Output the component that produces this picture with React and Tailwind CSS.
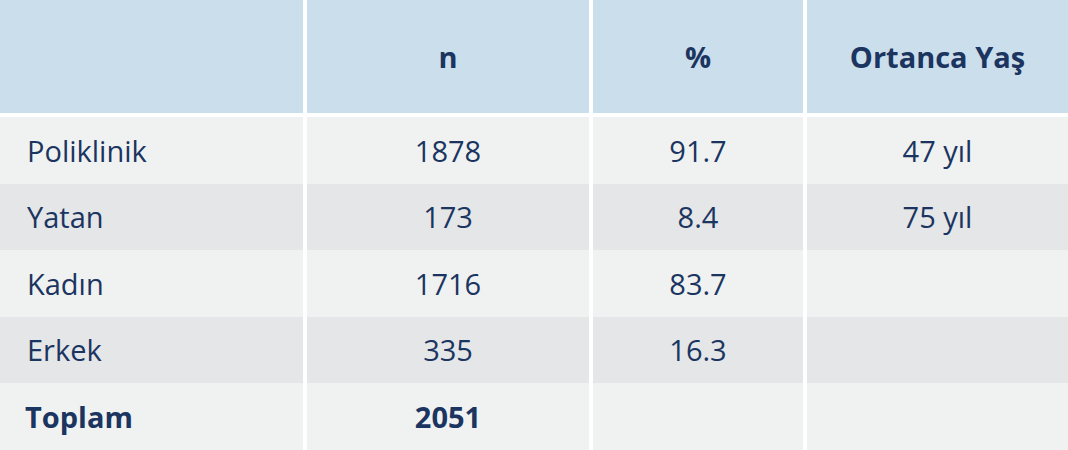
import React from 'react';

const rows = [
  { label: 'Poliklinik', n: '1878', pct: '91.7', age: '47 yıl' },
  { label: 'Yatan', n: '173', pct: '8.4', age: '75 yıl' },
  { label: 'Kadın', n: '1716', pct: '83.7', age: '' },
  { label: 'Erkek', n: '335', pct: '16.3', age: '' },
];

const cols = 'grid grid-cols-[303px_282px_210px_261px] gap-x-[4px]';

export default function App() {
  return (
    <div className="w-[1068px] h-[450px] bg-white overflow-hidden text-[#1b3560] font-['Open_Sans',sans-serif]">
      {/* Header */}
      <div className={`${cols} h-[113px] mb-[4px]`}>
        <div className="bg-[#cbdeeb]" />
        <div className="bg-[#cbdeeb] flex items-center justify-center text-[29px] font-bold">n</div>
        <div className="bg-[#cbdeeb] flex items-center justify-center text-[29px] font-bold">%</div>
        <div className="bg-[#cbdeeb] flex items-center justify-center text-[29px] font-bold">Ortanca Yaş</div>
      </div>

      {/* Body */}
      {rows.map((r, i) => {
        const bg = i % 2 === 0 ? 'bg-[#f0f2f2]' : 'bg-[#e4e6e8]';
        return (
          <div key={r.label} className={`${cols} h-[66.6px] text-[29px]`}>
            <div className={`${bg} flex items-center pl-[27px]`}>{r.label}</div>
            <div className={`${bg} flex items-center justify-center`}>{r.n}</div>
            <div className={`${bg} flex items-center justify-center`}>{r.pct}</div>
            <div className={`${bg} flex items-center justify-center`}>{r.age}</div>
          </div>
        );
      })}
      <div className={`${cols} h-[66.6px] text-[29px] font-bold`}>
        <div className="bg-[#f0f2f2] flex items-center pl-[25px]">Toplam</div>
        <div className="bg-[#f0f2f2] flex items-center justify-center">2051</div>
        <div className="bg-[#f0f2f2]" />
        <div className="bg-[#f0f2f2]" />
      </div>
    </div>
  );
}
